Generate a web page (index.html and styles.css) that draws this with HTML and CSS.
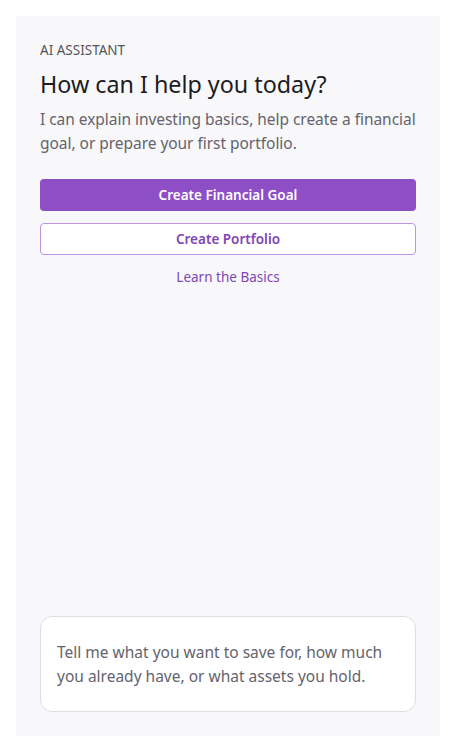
FILE: index.html
```html
<!DOCTYPE html>
<html>
<head>
	<meta charset="UTF-8">
	<title>AI Assistant</title>
	<link rel="stylesheet" href="styles.css">
</head>
<body>

<div class="panel">
	<div class="intro">
		<div class="eyebrow">AI ASSISTANT</div>
		<h1>How can I help you today?</h1>
		<p>I can explain investing basics, help create a financial goal, or prepare your first portfolio.</p>
	</div>

	<div class="actions">
		<button class="button primary">Create Financial Goal</button>
		<button class="button outline">Create Portfolio</button>
		<a class="link" href="#">Learn the Basics</a>
	</div>

	<div class="spacer"></div>

	<div class="prompt">Tell me what you want to save for, how much you already have, or what assets you hold.</div>
</div>

</body>
</html>
```

FILE: styles.css
```css
body{
	margin: 0;
	padding: 16px;
	font-family: "Noto Sans", "Open Sans", sans-serif;
	background-color: #fff;
	color: #222;
}

.panel{
	box-sizing: border-box;
	height: 720px;
	padding: 24px;
	background-color: #f8f8fb;
	display: flex;
	flex-direction: column;
}

.eyebrow{
	font-size: 13.5px;
	line-height: 20px;
	color: #555;
}

h1{
	margin: 8px 0 0 0;
	font-size: 23.3px;
	line-height: 32px;
	font-weight: 400;
	color: #1c1c22;
}

.intro p{
	margin: 7px 0 0 0;
	font-size: 15.5px;
	letter-spacing: -0.04px;
	line-height: 24px;
	color: #65636d;
}

.actions{
	margin-top: 24px;
	display: flex;
	flex-direction: column;
	gap: 12px;
}

.button{
	height: 32px;
	border-radius: 4px;
	font-family: inherit;
	font-size: 13.5px;
	font-weight: 600;
	cursor: pointer;
}

.primary{
	border: none;
	background-color: #8e4ec6;
	color: #fff;
}

.outline{
	border: 1px solid #be93e4;
	background-color: #fff;
	color: #8145b5;
}

.link{
	text-align: center;
	font-size: 13.5px;
	line-height: 20px;
	color: #8145b5;
	text-decoration: none;
}

.spacer{
	flex: 1;
}

.prompt{
	box-sizing: border-box;
	height: 96px;
	padding: 23px 16px;
	border: 1px solid #e0dde6;
	border-radius: 12px;
	background-color: #fff;
	font-size: 15.5px;
	line-height: 24px;
	color: #65636d;
}
```
